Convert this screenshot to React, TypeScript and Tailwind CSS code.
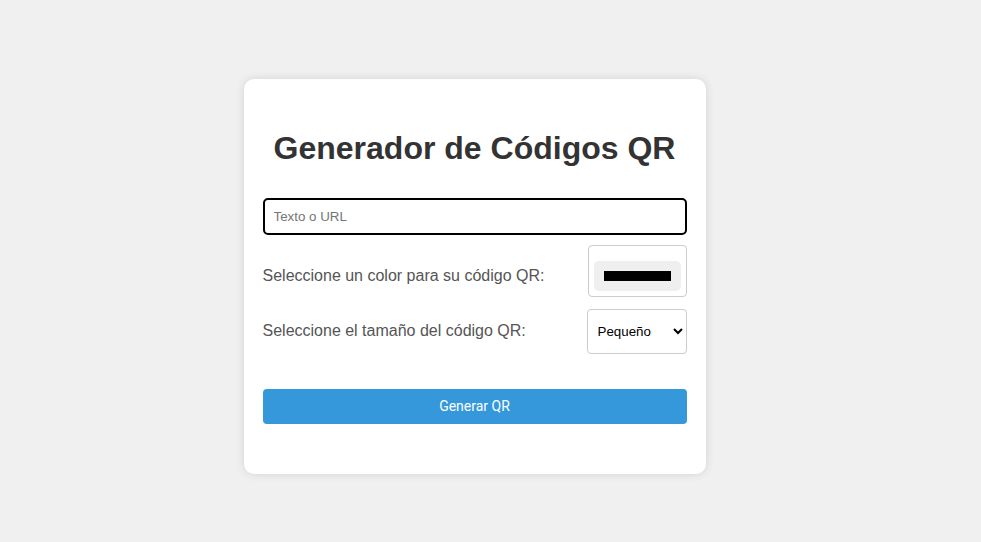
export default function App() {
  return (
    <main className="min-h-screen bg-[#f0f0f0] flex justify-center pt-[79px] pr-[32px] font-['Liberation_Sans',Arial,sans-serif]">
      <div className="w-[462px] h-[395px] bg-white rounded-[10px] shadow-[0_0_10px_rgba(0,0,0,0.12)] px-[19px] pt-[20px]">
        <h1 className="mt-[31px] mb-[31px] text-center text-[32px] leading-[37px] font-bold text-[#333]">
          Generador de Códigos QR
        </h1>

        {/* text input */}
        <div className="h-[37px] border-2 border-black rounded-[5px] flex items-center pl-[9px]">
          <input
            type="text"
            placeholder="Texto o URL"
            className="w-full outline-none text-[13.33px] placeholder:text-[#757575] font-['Liberation_Sans',Arial,sans-serif]"
          />
        </div>

        {/* color row */}
        <div className="mt-[10px] flex justify-between items-start">
          <label className="mt-[22px] text-[16px] leading-[18px] text-[#555]">
            Seleccione un color para su código QR:
          </label>
          <div className="w-[99px] h-[52px] border border-[#ccc] rounded-[4px] bg-white flex items-end px-[5px] pb-[5px]">
            <div className="w-full h-[30px] bg-[#efefef] rounded-[5px] flex items-center justify-center">
              <div className="w-[67px] h-[10px] bg-black" />
            </div>
          </div>
        </div>

        {/* size row */}
        <div className="mt-[12px] flex justify-between items-start">
          <label className="mt-[13px] text-[16px] leading-[18px] text-[#555]">
            Seleccione el tamaño del código QR:
          </label>
          <select className="w-[100px] h-[45px] border border-[#ccc] rounded-[4px] bg-white pl-[6px] pr-[4px] text-[13.33px] text-black font-['Liberation_Sans',Arial,sans-serif]">
            <option>Pequeño</option>
            <option>Mediano</option>
            <option>Grande</option>
          </select>
        </div>

        <button className="mt-[35px] w-full h-[35px] bg-[#3498db] rounded-[4px] text-white text-[14px] font-['Roboto',sans-serif]">
          Generar QR
        </button>
      </div>
    </main>
  );
}
